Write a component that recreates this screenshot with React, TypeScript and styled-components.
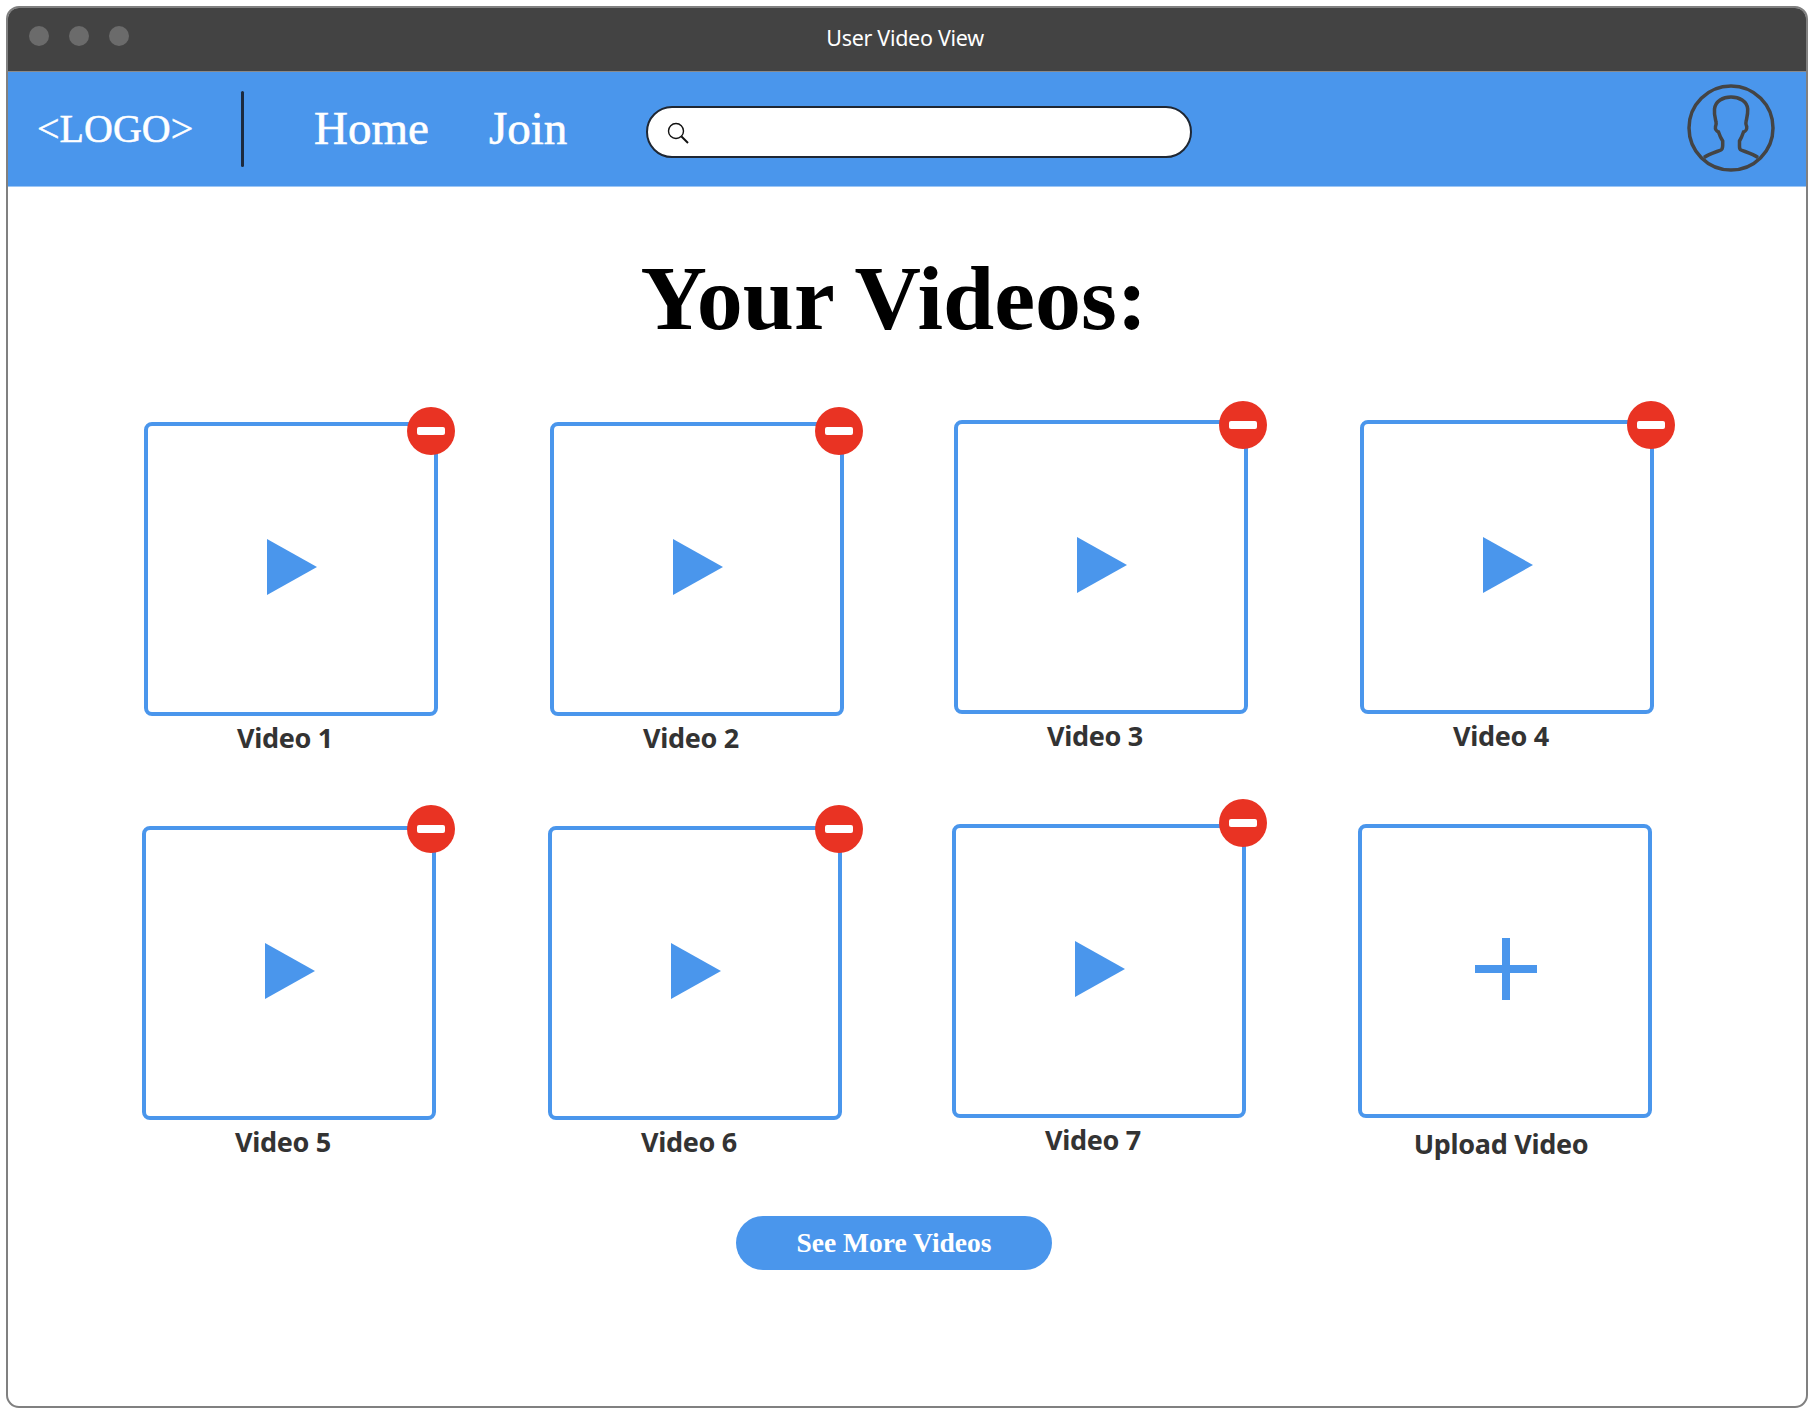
import styled, { createGlobalStyle } from 'styled-components';

const GlobalStyle = createGlobalStyle`
    html, body {
        margin: 0;
        padding: 0;
        background: #fff;
    }
`;

const blue = '#4a96ec';

const Page = styled.div`
    width: 1814px;
    height: 1416px;
    padding: 6px;
    box-sizing: border-box;
`;

const Window = styled.div`
    height: 1402px;
    box-sizing: border-box;
    border: 2px solid #808080;
    border-radius: 13px;
    overflow: hidden;
    display: flex;
    flex-direction: column;
    background: #fff;
`;

const TitleBar = styled.div`
    height: 64px;
    flex: none;
    position: relative;
    display: flex;
    align-items: center;
    justify-content: center;
    background: #434343;
    border-bottom: 1px solid #8a8a8a;
    box-sizing: border-box;
`;

const Lights = styled.div`
    position: absolute;
    left: 21px;
    top: 18px;
    display: flex;
    gap: 20px;
`;

const Light = styled.span`
    width: 20px;
    height: 20px;
    border-radius: 50%;
    background: #6b6b6b;
`;

const WindowTitle = styled.span`
    font-family: 'Noto Sans', sans-serif;
    font-size: 21.5px;
    color: #fff;
    letter-spacing: -0.3px;
    margin-left: -4px;
    margin-top: -4px;
`;

const NavBar = styled.nav`
    height: 115px;
    flex: none;
    display: flex;
    align-items: center;
    background: ${blue};
    border-bottom: 1px solid #9cc6f5;
    box-sizing: border-box;
    padding: 0 30px 0 29px;
`;

const Logo = styled.span`
    font-family: 'Liberation Serif', serif;
    font-size: 40px;
    color: #fff;
    width: 204px;
    margin-top: -2px;
    -webkit-text-stroke: 0.5px #fff;
`;

const Divider = styled.span`
    width: 3px;
    height: 76px;
    border-radius: 2px;
    background: #1c2a3e;
    margin-right: 70px;
`;

const NavLink = styled.a<{ $gap: number }>`
    font-family: 'Liberation Serif', serif;
    font-size: 47px;
    color: #fff;
    margin-top: -2px;
    margin-right: ${(p) => p.$gap}px;
    -webkit-text-stroke: 0.6px #fff;
`;

const Search = styled.div`
    width: 546px;
    height: 52px;
    box-sizing: border-box;
    display: flex;
    align-items: center;
    padding: 2px 0 0 19px;
    background: #fff;
    border: 2.5px solid #1f2733;
    border-radius: 26px;
    margin-top: 5px;
`;

const Avatar = styled.svg`
    width: 88px;
    height: 88px;
    margin-left: auto;
    margin-right: 1px;
    margin-top: -2px;
`;

const Main = styled.main`
    flex: 1;
    display: flex;
    flex-direction: column;
`;

const Heading = styled.h1`
    font-family: 'Liberation Serif', serif;
    font-size: 92px;
    line-height: 100px;
    font-weight: 700;
    color: #000;
    margin: 61px 0 0;
    align-self: center;
    transform: translateX(-13px);
`;

const Row = styled.div<{ $left: number; $top: number }>`
    display: flex;
    align-items: flex-start;
    padding-left: ${(p) => p.$left}px;
    margin-top: ${(p) => p.$top}px;
`;

const Tile = styled.div<{ $gap: number; $drop: number }>`
    width: 294px;
    margin-left: ${(p) => p.$gap}px;
    margin-top: ${(p) => p.$drop}px;
    display: flex;
    flex-direction: column;
`;

const Frame = styled.div<{ $lift: number }>`
    position: relative;
    width: 294px;
    height: 294px;
    box-sizing: border-box;
    border: 4px solid ${blue};
    border-radius: 8px;
    padding-bottom: ${(p) => p.$lift}px;
    display: flex;
    align-items: center;
    justify-content: center;
`;

const Remove = styled.button<{ $top: number; $right: number }>`
    position: absolute;
    top: ${(p) => p.$top}px;
    right: ${(p) => p.$right}px;
    width: 48px;
    height: 48px;
    padding: 0;
    border: none;
    border-radius: 50%;
    background: #e93323;
    display: flex;
    align-items: center;
    justify-content: center;
    &::before {
        content: '';
        width: 28px;
        height: 8px;
        border-radius: 2px;
        background: #fff;
    }
`;

const Caption = styled.div<{ $top: number; $inset: number }>`
    font-family: 'Noto Sans', sans-serif;
    font-size: 27px;
    line-height: 34px;
    font-weight: 700;
    color: #333;
    text-align: center;
    padding-right: ${(p) => p.$inset}px;
    margin-top: ${(p) => p.$top}px;
    letter-spacing: -0.3px;
`;

const SeeMore = styled.button`
    align-self: center;
    width: 316px;
    height: 54px;
    margin-top: 55px;
    transform: translateX(-13px);
    border: none;
    border-radius: 27px;
    background: ${blue};
    color: #fff;
    font-family: 'Liberation Serif', serif;
    font-size: 27.5px;
    font-weight: 700;
`;

const Play = styled.svg`
    margin-left: 2px;
`;

const Plus = styled.svg`
    margin-left: 2px;
`;

const PlayIcon = () => (
    <Play width="50" height="56" viewBox="0 0 50 56">
        <path d="M0 0 L50 28 L0 56 Z" fill={blue} />
    </Play>
);

const PlusIcon = () => (
    <Plus width="62" height="62" viewBox="0 0 62 62">
        <path d="M27 0 H35 V27 H62 V35 H35 V62 H27 V35 H0 V27 H27 Z" fill={blue} />
    </Plus>
);

const SearchIcon = () => (
    <svg width="22" height="22" viewBox="0 0 22 22" fill="none" stroke="#111">
        <circle cx="9" cy="9" r="7.5" strokeWidth="1.4" />
        <path d="M14.5 14.5 L21 21" strokeWidth="2" />
    </svg>
);

type VideoProps = {
    name: string;
    gap: number;
    drop: number;
    top: number;
    right: number;
};

const VideoTile = ({ name, gap, drop, top, right }: VideoProps) => (
    <Tile $gap={gap} $drop={drop}>
        <Frame $lift={5}>
            <Remove $top={top} $right={right} />
            <PlayIcon />
        </Frame>
        <Caption $top={5} $inset={12}>{name}</Caption>
    </Tile>
);

export default function App() {
    return (
        <Page>
            <GlobalStyle />
            <Window>
                <TitleBar>
                    <Lights>
                        <Light />
                        <Light />
                        <Light />
                    </Lights>
                    <WindowTitle>User Video View</WindowTitle>
                </TitleBar>
                <NavBar>
                    <Logo>&lt;LOGO&gt;</Logo>
                    <Divider />
                    <NavLink $gap={60}>Home</NavLink>
                    <NavLink $gap={79}>Join</NavLink>
                    <Search>
                        <SearchIcon />
                    </Search>
                    <Avatar viewBox="0 0 88 88" fill="none" stroke="#444" strokeWidth="3.5">
                        <circle cx="44" cy="44" r="42" />
                        <path d="M17 73.5 C22 70 29 68 34 66 C36 65 35.7 63 35.7 60 L35.7 57 C34 54.5 32.5 51 31.5 48 C29.5 47.5 28 45 28.5 42.5 C29 41 29.5 40 29 38 C28 33 27 30 27.5 25 C28.5 17 36 13 44 13 C52 13 60 17 60.7 25 C61 30 60 33 59 38 C58.5 40 59 41 59.7 42.5 C60 45 58.7 47.5 56.5 48 C55.5 51 54 54.5 52.5 57 L52.5 60 C52.5 63 52 65 54 66 C59 68 66 70 71 73.5" />
                    </Avatar>
                </NavBar>
                <Main>
                    <Heading>Your Videos:</Heading>
                    <Row $left={136} $top={72}>
                        <VideoTile name="Video 1" gap={0} drop={2} top={-19} right={-21} />
                        <VideoTile name="Video 2" gap={112} drop={2} top={-19} right={-23} />
                        <VideoTile name="Video 3" gap={110} drop={0} top={-23} right={-23} />
                        <VideoTile name="Video 4" gap={112} drop={0} top={-23} right={-25} />
                    </Row>
                    <Row $left={134} $top={69}>
                        <VideoTile name="Video 5" gap={0} drop={2} top={-25} right={-23} />
                        <VideoTile name="Video 6" gap={112} drop={2} top={-25} right={-25} />
                        <VideoTile name="Video 7" gap={110} drop={0} top={-29} right={-25} />
                        <Tile $gap={112} $drop={0}>
                            <Frame $lift={5}>
                                <PlusIcon />
                            </Frame>
                            <Caption $top={9} $inset={8}>Upload Video</Caption>
                        </Tile>
                    </Row>
                    <SeeMore>See More Videos</SeeMore>
                </Main>
            </Window>
        </Page>
    );
}
